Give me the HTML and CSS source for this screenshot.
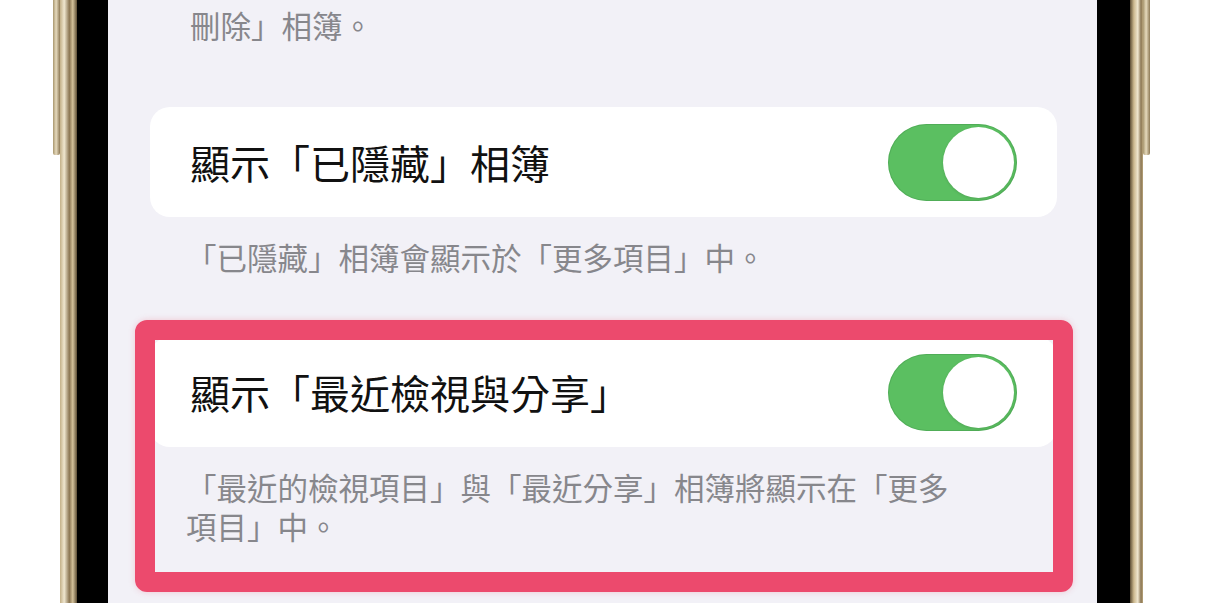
FILE: index.html
```html
<!DOCTYPE html>
<html lang="zh-Hant">
<head>
    <meta charset="UTF-8">
    <meta name="viewport" content="width=device-width, initial-scale=1.0">
    <title>相簿設定</title>
    <link rel="stylesheet" href="styles.css">
</head>
<body>
    <div class="phone">
        <div class="side-button"></div>
        <div class="frame frame-left"></div>
        <div class="bezel bezel-left"></div>

        <div class="screen">
            <p class="note note-top">刪除」相簿。</p>

            <!-- Hidden album -->
            <div class="card">
                <span class="card-title">顯示「已隱藏」相簿</span>
                <div class="toggle on"><div class="knob"></div></div>
            </div>
            <p class="note">「已隱藏」相簿會顯示於「更多項目」中。</p>

            <!-- Recently viewed & shared -->
            <div class="card card-second">
                <span class="card-title">顯示「最近檢視與分享」</span>
                <div class="toggle on"><div class="knob"></div></div>
            </div>
            <p class="note note-multi">「最近的檢視項目」與「最近分享」相簿將顯示在「更多項目」中。</p>

            <!-- Highlight annotation -->
            <div class="highlight"></div>
        </div>

        <div class="bezel bezel-right"></div>
        <div class="frame frame-right"></div>
        <div class="side-button"></div>
    </div>
</body>
</html>
```

FILE: styles.css
```css
body {
    margin: 0;
    padding: 0;
    background: #ffffff;
    font-family: "Noto Sans CJK TC", "Noto Sans", sans-serif;
    overflow: hidden;
}
.phone {
    display: flex;
    align-items: flex-start;
    height: 603px;
    padding-left: 53px;
}
.side-button {
    width: 7px;
    height: 155px;
    background: linear-gradient(to right, #a8966e, #e6dabd 45%, #8d7955);
    border-radius: 0 0 2px 2px;
}
.frame {
    height: 603px;
}
.frame-left {
    width: 17px;
    background: linear-gradient(to right, #c3b088, #efe6cf 25%, #8b7653 55%, #d3c19a 75%, #5d4e35);
}
.frame-right {
    width: 13px;
    background: linear-gradient(to right, #5d4e35, #cdb98f 30%, #efe6cf 60%, #8b7653 85%, #b9a57c);
}
.bezel {
    height: 603px;
    background: #000000;
}
.bezel-left {
    width: 31px;
}
.bezel-right {
    width: 33px;
}
.screen {
    position: relative;
    width: 989px;
    height: 603px;
    box-sizing: border-box;
    padding: 5px 40px 0 42px;
    background: #f2f1f7;
}
.note {
    margin: 20px 0 0;
    padding: 0 100px 0 36px;
    font-size: 30.5px;
    line-height: 40px;
    color: #87878c;
}
.note-top {
    margin-top: 0;
    padding-left: 40px;
}
.note-multi {
    margin-top: 21px;
    line-height: 39px;
}
.card {
    display: flex;
    align-items: center;
    justify-content: space-between;
    height: 110px;
    margin-top: 62px;
    padding: 0 40px;
    background: #ffffff;
    border-radius: 20px;
}
.card-second {
    margin-top: 60px;
}
.card-title {
    font-size: 40px;
    color: #111111;
}
.toggle {
    display: flex;
    align-items: center;
    justify-content: flex-end;
    width: 129px;
    height: 77px;
    box-sizing: border-box;
    padding: 0 3px;
    border-radius: 39px;
    background: #5bbf61;
    box-shadow: inset 0 0 0 1px rgba(60, 140, 70, 0.35);
}
.knob {
    width: 71px;
    height: 71px;
    border-radius: 50%;
    background: #ffffff;
    box-shadow: 0 1px 3px rgba(0, 0, 0, 0.12);
}
.highlight {
    position: absolute;
    left: 27px;
    top: 320px;
    width: 938px;
    height: 272px;
    box-sizing: border-box;
    border: 20px solid #ec4a6d;
    border-radius: 12px;
    box-shadow: 0 0 6px rgba(236, 74, 109, 0.25);
}
```
